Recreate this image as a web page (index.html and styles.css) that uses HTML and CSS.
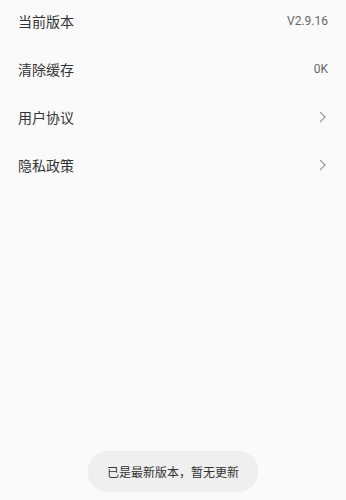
FILE: index.html
```html
<!DOCTYPE html>
<html lang="zh-CN">
<head>
  <meta charset="utf-8">
  <meta name="viewport" content="width=device-width, initial-scale=1.0">
  <title>设置</title>
  <link rel="stylesheet" href="styles.css">
</head>
<body>
  <div class="list">
    <div class="row">
      <span class="label">当前版本</span>
      <span class="value">V2.9.16</span>
    </div>
    <div class="row">
      <span class="label">清除缓存</span>
      <span class="value">0K</span>
    </div>
    <div class="row">
      <span class="label">用户协议</span>
      <svg class="arrow" width="7" height="12" viewBox="0 0 7 12"><path d="M1 1 L6 6 L1 11" fill="none" stroke="#9a9a9a" stroke-width="1.2"/></svg>
    </div>
    <div class="row">
      <span class="label">隐私政策</span>
      <svg class="arrow" width="7" height="12" viewBox="0 0 7 12"><path d="M1 1 L6 6 L1 11" fill="none" stroke="#9a9a9a" stroke-width="1.2"/></svg>
    </div>
  </div>

  <div class="toast">已是最新版本，暂无更新</div>
</body>
</html>
```

FILE: styles.css
```css
* {
    box-sizing: border-box;
}
html, body {
    height: 100%;
}
body {
    margin: 0;
    background: #fafafa;
    font-family: Roboto, "Noto Sans CJK SC", sans-serif;
    color: #333;
}

.list {
    margin-top: -3px;
}

.row {
    height: 48px;
    display: flex;
    align-items: center;
    justify-content: space-between;
    padding: 0 18px 0 18px;
}

.label {
    font-size: 14px;
    color: #333;
}

.value {
    font-size: 12px;
    color: #666;
}

.arrow {
    margin-right: 2px;
}

.toast {
    position: fixed;
    left: 50%;
    bottom: 8px;
    transform: translateX(-50%);
    width: 171px;
    height: 41px;
    border-radius: 21px;
    background: #efefef;
    font-size: 12px;
    color: #333;
    display: flex;
    align-items: center;
    justify-content: center;
}
```
